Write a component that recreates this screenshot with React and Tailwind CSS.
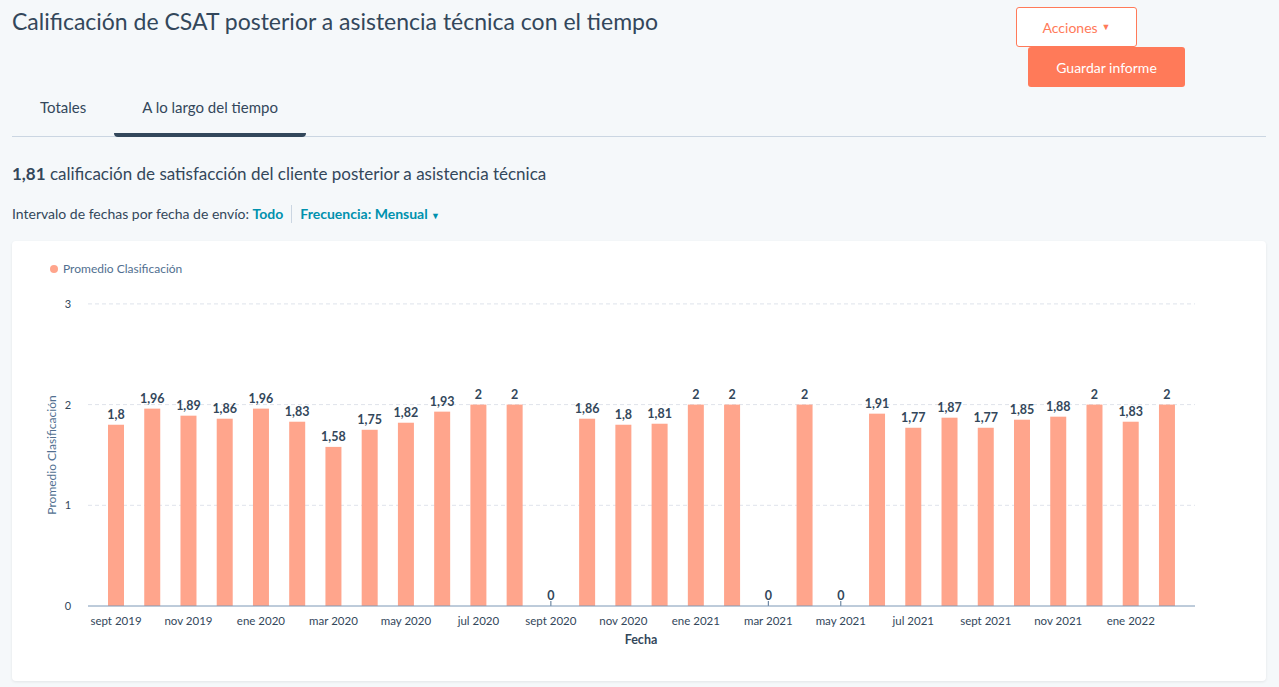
const VALUES = [1.8,1.96,1.89,1.86,1.96,1.83,1.58,1.75,1.82,1.93,2,2,0,1.86,1.8,1.81,2,2,0,2,0,1.91,1.77,1.87,1.77,1.85,1.88,2,1.83,2];
const MONTHS = ['sept 2019','nov 2019','ene 2020','mar 2020','may 2020','jul 2020','sept 2020','nov 2020','ene 2021','mar 2021','may 2021','jul 2021','sept 2021','nov 2021','ene 2022'];

const ZERO = 365;
const UNIT = 100.7;
const cx = (i) => 104 + 36.24 * i;
const fmt = (v) => String(v).replace('.', ',');

function Chart() {
  return (
    <svg width="1254" height="440" className="block" style={{ fontFamily: 'Lato, sans-serif' }}>
      <circle cx="42" cy="28" r="4" fill="#ffa58c" />
      <text x="51" y="32" fontSize="12" fill="#516f90">Promedio Clasificación</text>
      {[1, 2, 3].map((t) => (
        <line key={t} x1="76" x2="1183" y1={ZERO - t * UNIT} y2={ZERO - t * UNIT} stroke="#dfe3eb" strokeDasharray="4 3" />
      ))}
      {[0, 1, 2, 3].map((t) => (
        <text key={t} x="56" y={ZERO - t * UNIT + 4} fontSize="11" fill="#33475b" textAnchor="middle">{t}</text>
      ))}
      <text transform="translate(44 214) rotate(-90)" fontSize="12" fill="#516f90" textAnchor="middle">Promedio Clasificación</text>
      {VALUES.map((v, i) => (
        <g key={i}>
          {v > 0 && <rect x={cx(i) - 8} y={ZERO - v * UNIT} width="16" height={v * UNIT} fill="#ffa58c" />}
          {v === 0 && <line x1={cx(i)} x2={cx(i)} y1={ZERO - 5} y2={ZERO} stroke="#516f90" />}
          <text x={cx(i)} y={ZERO - v * UNIT - 6} fontSize="12.5" fontWeight="700" fill="#33475b" textAnchor="middle">{fmt(v)}</text>
        </g>
      ))}
      <line x1="76" x2="1183" y1={ZERO} y2={ZERO} stroke="#7c98b6" />
      {MONTHS.map((m, k) => (
        <text key={m} x={cx(k * 2)} y="384" fontSize="11.5" fill="#33475b" textAnchor="middle">{m}</text>
      ))}
      <text x="629" y="403" fontSize="12.5" fontWeight="700" fill="#33475b" textAnchor="middle">Fecha</text>
    </svg>
  );
}

export default function App() {
  return (
    <div className="w-[1279px] h-[687px] overflow-hidden bg-[#f5f8fa] text-[#33475b] px-3 relative" style={{ fontFamily: 'Lato, sans-serif' }}>
      <div className="flex justify-between">
        <h1 className="text-[23px] leading-[26px] mt-[8px]">Calificación de CSAT posterior a asistencia técnica con el tiempo</h1>
        <div className="relative w-[260px] h-[88px]">
          <button className="absolute left-[9px] top-[7px] w-[121px] h-[40px] bg-white border border-[#ff7a59] rounded-[3px] text-[#ff7a59] text-[14px] flex items-center justify-center gap-1">
            Acciones <span className="text-[9px]">▼</span>
          </button>
          <button className="absolute left-[21px] top-[47px] w-[157px] h-[40px] bg-[#ff7a59] rounded-[3px] text-white text-[14px]">
            Guardar informe
          </button>
        </div>
      </div>
      <div className="flex border-b border-[#cbd6e2] mt-[1px] text-[15px] w-[1254px]">
        <div className="pl-7 pr-7 pb-[16px] pt-[7px]">Totales</div>
        <div className="px-7 pb-[14px] pt-[7px] border-b-[4px] border-[#33475b] rounded-sm -mb-px">A lo largo del tiempo</div>
      </div>
      <p className="mt-[24px] text-[17px]"><b>1,81</b> calificación de satisfacción del cliente posterior a asistencia técnica</p>
      <div className="mt-[17px] text-[14px] flex items-center">
        <span>Intervalo de fechas por fecha de envío: <b className="text-[#0091ae]">Todo</b></span>
        <span className="mx-2 h-[18px] border-l border-[#cbd6e2]" />
        <b className="text-[#0091ae]">Frecuencia: Mensual <span className="text-[9px]">▼</span></b>
      </div>
      <div className="mt-[17px] w-[1254px] h-[440px] bg-white rounded-sm shadow-[0_1px_3px_rgba(0,0,0,0.08)]">
        <Chart />
      </div>
    </div>
  );
}
